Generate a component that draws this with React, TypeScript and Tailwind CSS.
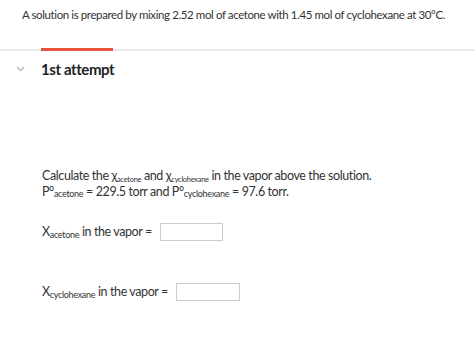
export default function App() {
  return (
    <div className="w-[474px] h-[342px] bg-white text-[#333] overflow-hidden" style={{ fontFamily: "Lato, 'Open Sans', sans-serif" }}>
      <p className="pl-[22px] pt-[7px] text-[11.5px] leading-[16px] tracking-[-0.4px] whitespace-nowrap">
        A solution is prepared by mixing 2.52 mol of acetone with 1.45 mol of cyclohexane at 30°C.
      </p>
      <div className="mt-[26px] h-[2px] bg-[#e8e8e8] relative">
        <div className="absolute left-[41px] top-[-1px] w-[72px] h-[3px] bg-[#e8553f]" />
      </div>
      <div className="flex items-center h-[36px]">
        <svg className="ml-[16px] w-[9px] h-[6px]" viewBox="0 0 9 6">
          <path d="M1 1l3.5 3.5L8 1" fill="none" stroke="#b8b8b8" strokeWidth="1.4" />
        </svg>
        <span className="ml-[16px] text-[15px] font-bold text-[#222] tracking-[-0.4px]">1st attempt</span>
      </div>
      <div className="pl-[42px] pt-[81px] text-[12.5px] leading-[16px] tracking-[-0.4px] whitespace-nowrap">
        <p>
          Calculate the χ<sub className="text-[7.5px] tracking-[-0.3px]">acetone</sub> and χ
          <sub className="text-[7.5px] tracking-[-0.3px]">cyclohexane</sub> in the vapor above the solution.
        </p>
        <p>
          P°<sub className="text-[9px] tracking-[-0.3px] relative top-[1px]">acetone</sub> = 229.5 torr and P°
          <sub className="text-[9px] tracking-[-0.3px] relative top-[1px]">cyclohexane</sub> = 97.6 torr.
        </p>
        <div className="flex items-center mt-[23px]">
          <span>
            X<sub className="text-[9px] tracking-[-0.3px]">acetone</sub> in the vapor =
          </span>
          <div className="ml-[8px] w-[63px] h-[18px] border border-[#ccc] bg-white" />
        </div>
        <div className="flex items-center mt-[42px]">
          <span>
            X<sub className="text-[9px] tracking-[-0.3px]">cyclohexane</sub> in the vapor =
          </span>
          <div className="ml-[8px] w-[64px] h-[18px] border border-[#ccc] bg-white" />
        </div>
      </div>
    </div>
  );
}
